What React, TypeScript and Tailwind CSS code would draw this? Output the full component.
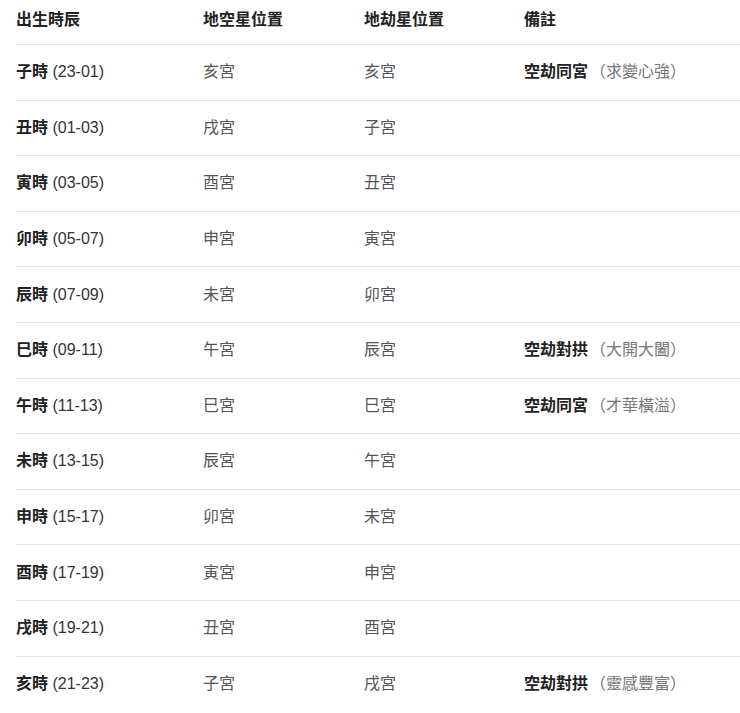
import React from "react";

type Row = { name: string; range: string; kong: string; jie: string; noteB?: string; noteG?: string };

const rows: Row[] = [
  { name: "子時", range: "(23-01)", kong: "亥宮", jie: "亥宮", noteB: "空劫同宮", noteG: "（求變心強）" },
  { name: "丑時", range: "(01-03)", kong: "戌宮", jie: "子宮" },
  { name: "寅時", range: "(03-05)", kong: "酉宮", jie: "丑宮" },
  { name: "卯時", range: "(05-07)", kong: "申宮", jie: "寅宮" },
  { name: "辰時", range: "(07-09)", kong: "未宮", jie: "卯宮" },
  { name: "巳時", range: "(09-11)", kong: "午宮", jie: "辰宮", noteB: "空劫對拱", noteG: "（大開大闔）" },
  { name: "午時", range: "(11-13)", kong: "巳宮", jie: "巳宮", noteB: "空劫同宮", noteG: "（才華橫溢）" },
  { name: "未時", range: "(13-15)", kong: "辰宮", jie: "午宮" },
  { name: "申時", range: "(15-17)", kong: "卯宮", jie: "未宮" },
  { name: "酉時", range: "(17-19)", kong: "寅宮", jie: "申宮" },
  { name: "戌時", range: "(19-21)", kong: "丑宮", jie: "酉宮" },
  { name: "亥時", range: "(21-23)", kong: "子宮", jie: "戌宮", noteB: "空劫對拱", noteG: "（靈感豐富）" },
];

const font = { fontFamily: '"Liberation Sans", Arial, "Noto Sans CJK TC", sans-serif' };

export default function App() {
  return (
    <div className="w-[740px] h-[713px] overflow-hidden bg-white pl-4" style={font}>
      <div className="grid grid-cols-[187px_161px_160px_1fr] h-[45px] items-center pb-[4px] border-b border-[#e3e3e3] text-[16px] font-bold text-[#222]">
        <div>出生時辰</div>
        <div>地空星位置</div>
        <div>地劫星位置</div>
        <div>備註</div>
      </div>
      {rows.map((r) => (
        <div
          key={r.name}
          className="grid grid-cols-[187px_161px_160px_1fr] h-[55.6px] items-center border-b border-[#e3e3e3] last:border-b-0 text-[16px]"
        >
          <div className="text-[#222]">
            <span className="font-bold">{r.name}</span>
            <span className="text-[#333]">&nbsp;{r.range}</span>
          </div>
          <div className="text-[#555]">{r.kong}</div>
          <div className="text-[#555]">{r.jie}</div>
          <div>
            {r.noteB && <span className="font-bold text-[#222]">{r.noteB}</span>}
            {r.noteG && <span className="text-[#777] pl-[2px]">{r.noteG}</span>}
          </div>
        </div>
      ))}
    </div>
  );
}
